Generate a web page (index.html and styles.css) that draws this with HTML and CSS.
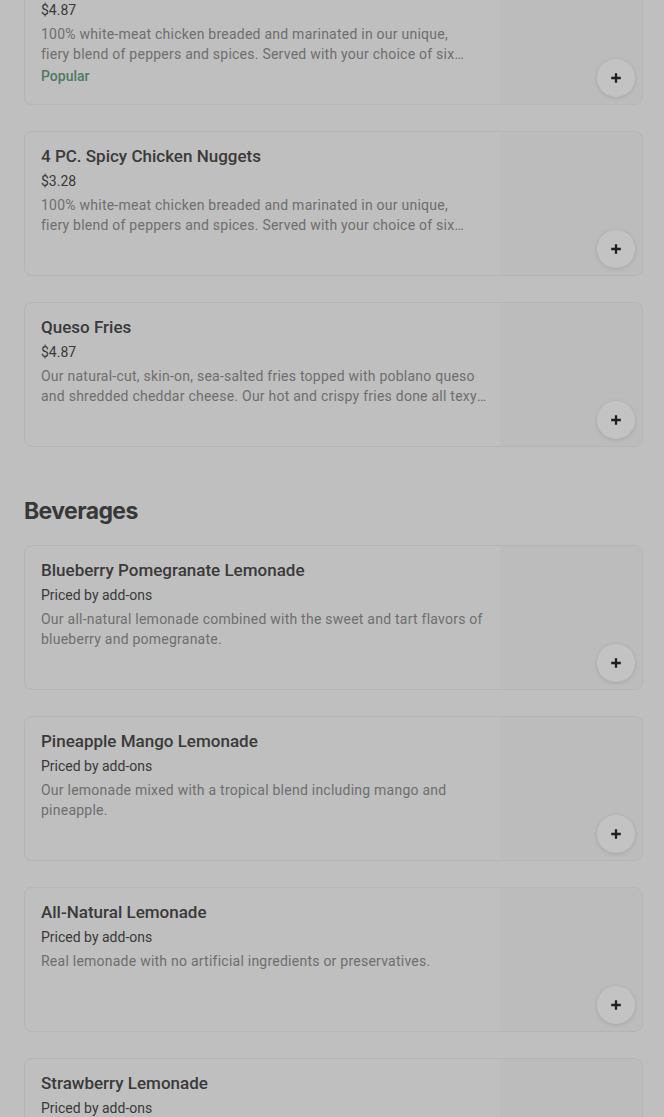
FILE: index.html
```html
<!DOCTYPE html>
<html lang="en">
<head>
<meta charset="utf-8">
<title>Menu</title>
<link rel="stylesheet" href="styles.css">
</head>
<body>
<main class="menu">
  <section class="section">
    <div class="item-list">
      <article class="item">
        <div class="item-text">
          <h3 class="item-title">8 PC. Spicy Chicken Nuggets</h3>
          <div class="item-price">$4.87</div>
          <p class="item-desc">100% white-meat chicken breaded and marinated in our unique,<br>fiery blend of peppers and spices. Served with your choice of six dipping sauces.</p>
          <div class="item-tag">Popular</div>
        </div>
        <div class="item-media"><button class="add-btn" aria-label="Add"><svg viewBox="0 0 16 16" width="14" height="14"><path d="M8 2.5v11M2.5 8h11" stroke="#1f1f1f" stroke-width="2.6"/></svg></button></div>
      </article>
      <article class="item">
        <div class="item-text">
          <h3 class="item-title">4 PC. Spicy Chicken Nuggets</h3>
          <div class="item-price">$3.28</div>
          <p class="item-desc">100% white-meat chicken breaded and marinated in our unique,<br>fiery blend of peppers and spices. Served with your choice of six dipping sauces.</p>
        </div>
        <div class="item-media"><button class="add-btn" aria-label="Add"><svg viewBox="0 0 16 16" width="14" height="14"><path d="M8 2.5v11M2.5 8h11" stroke="#1f1f1f" stroke-width="2.6"/></svg></button></div>
      </article>
      <article class="item">
        <div class="item-text">
          <h3 class="item-title">Queso Fries</h3>
          <div class="item-price">$4.87</div>
          <p class="item-desc">Our natural-cut, skin-on, sea-salted fries topped with poblano queso and shredded cheddar cheese. Our hot and crispy fries done all texy style.</p>
        </div>
        <div class="item-media"><button class="add-btn" aria-label="Add"><svg viewBox="0 0 16 16" width="14" height="14"><path d="M8 2.5v11M2.5 8h11" stroke="#1f1f1f" stroke-width="2.6"/></svg></button></div>
      </article>
    </div>
  </section>

  <section class="section">
    <h2 class="section-title">Beverages</h2>
    <div class="item-list">
      <article class="item">
        <div class="item-text">
          <h3 class="item-title">Blueberry Pomegranate Lemonade</h3>
          <div class="item-price">Priced by add-ons</div>
          <p class="item-desc">Our all-natural lemonade combined with the sweet and tart flavors of blueberry and pomegranate.</p>
        </div>
        <div class="item-media"><button class="add-btn" aria-label="Add"><svg viewBox="0 0 16 16" width="14" height="14"><path d="M8 2.5v11M2.5 8h11" stroke="#1f1f1f" stroke-width="2.6"/></svg></button></div>
      </article>
      <article class="item">
        <div class="item-text">
          <h3 class="item-title">Pineapple Mango Lemonade</h3>
          <div class="item-price">Priced by add-ons</div>
          <p class="item-desc">Our lemonade mixed with a tropical blend including mango and pineapple.</p>
        </div>
        <div class="item-media"><button class="add-btn" aria-label="Add"><svg viewBox="0 0 16 16" width="14" height="14"><path d="M8 2.5v11M2.5 8h11" stroke="#1f1f1f" stroke-width="2.6"/></svg></button></div>
      </article>
      <article class="item">
        <div class="item-text">
          <h3 class="item-title">All-Natural Lemonade</h3>
          <div class="item-price">Priced by add-ons</div>
          <p class="item-desc">Real lemonade with no artificial ingredients or preservatives.</p>
        </div>
        <div class="item-media"><button class="add-btn" aria-label="Add"><svg viewBox="0 0 16 16" width="14" height="14"><path d="M8 2.5v11M2.5 8h11" stroke="#1f1f1f" stroke-width="2.6"/></svg></button></div>
      </article>
      <article class="item">
        <div class="item-text">
          <h3 class="item-title">Strawberry Lemonade</h3>
          <div class="item-price">Priced by add-ons</div>
          <p class="item-desc">Our all-natural lemonade with the sweet taste of strawberries.</p>
        </div>
        <div class="item-media"><button class="add-btn" aria-label="Add"><svg viewBox="0 0 16 16" width="14" height="14"><path d="M8 2.5v11M2.5 8h11" stroke="#1f1f1f" stroke-width="2.6"/></svg></button></div>
      </article>
    </div>
  </section>
</main>
</body>
</html>
```

FILE: styles.css
```css
html, body {
  margin: 0;
  padding: 0;
  background: #bfbfbf;
}
body {
  font-family: Roboto, "Liberation Sans", Arial, sans-serif;
  color: #363636;
  overflow: hidden;
}
.menu {
  margin-top: -40px;
  padding: 0 21px 0 24px;
  display: flex;
  flex-direction: column;
  gap: 48px;
}
.section-title {
  margin: 0 0 18px;
  font-family: Inter, Roboto, "Liberation Sans", sans-serif;
  font-size: 23px;
  line-height: 32px;
  font-weight: 700;
  letter-spacing: -0.6px;
  color: #383838;
}
.item-list {
  display: flex;
  flex-direction: column;
  gap: 26px;
}
.item {
  display: flex;
  height: 145px;
  box-sizing: border-box;
  border: 1px solid #b5b5b5;
  border-radius: 8px;
  overflow: hidden;
  background: #bfbfbf;
}
.item-text {
  flex: 1;
  min-width: 0;
  padding: 13px 10px 0 16px;
}
.item-title {
  margin: 0;
  font-size: 17px;
  line-height: 22px;
  font-weight: 500;
  color: #3a3a3a;
}
.item-price {
  margin-top: 4px;
  font-size: 14px;
  line-height: 20px;
  color: #393939;
}
.item-desc {
  margin: 4px 0 0;
  font-size: 14px;
  line-height: 20px;
  letter-spacing: 0.24px;
  color: #6e6e6e;
  display: -webkit-box;
  -webkit-line-clamp: 2;
  -webkit-box-orient: vertical;
  overflow: hidden;
}
.item-tag {
  margin-top: 2px;
  font-size: 14px;
  line-height: 20px;
  font-weight: 500;
  color: #4e7a62;
}
.item-media {
  position: relative;
  width: 142px;
  flex: none;
  background: #bcbcbc;
}
.add-btn {
  position: absolute;
  right: 7px;
  bottom: 7px;
  width: 38px;
  height: 38px;
  padding: 0;
  border: none;
  border-radius: 50%;
  background: #c3c3c3;
  box-shadow: 0 1px 4px rgba(0, 0, 0, 0.12);
  display: flex;
  align-items: center;
  justify-content: center;
  cursor: pointer;
}
```
